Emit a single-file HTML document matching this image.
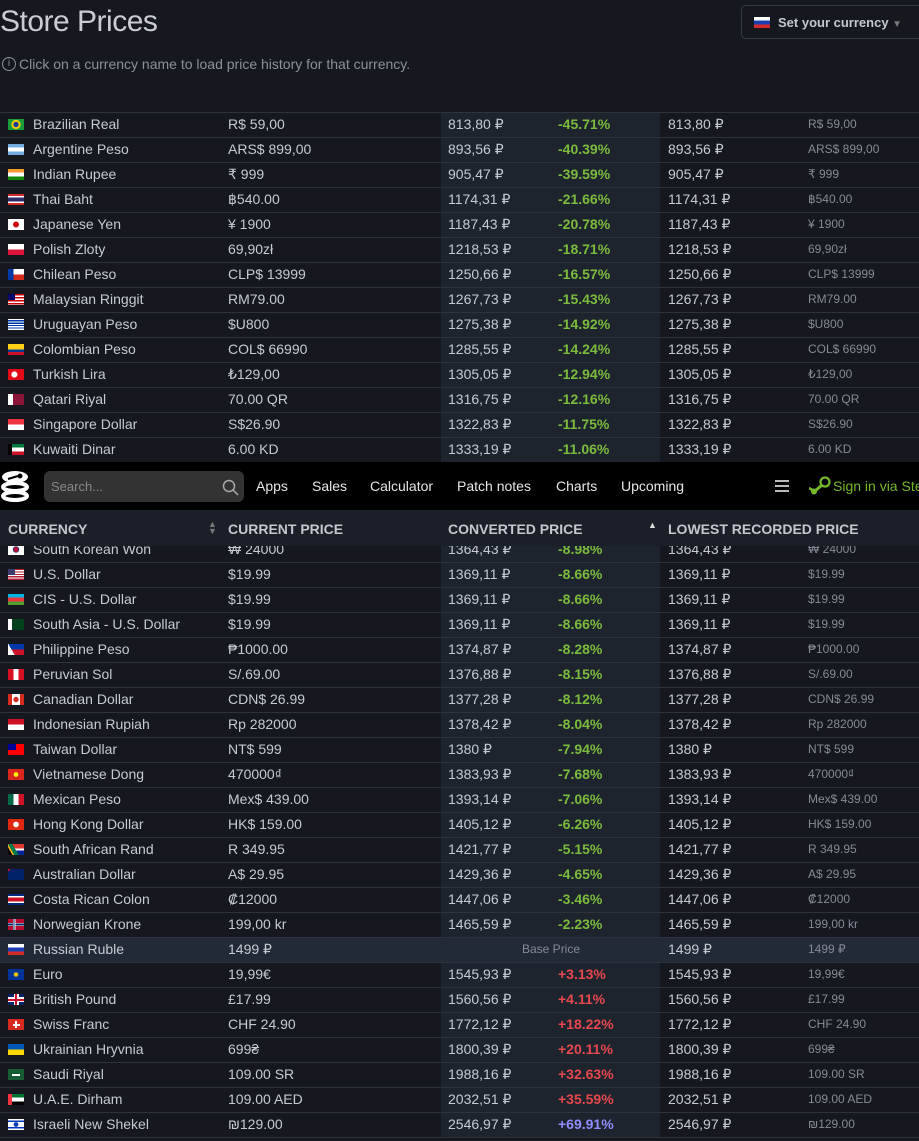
<!DOCTYPE html>
<html><head><meta charset="utf-8"><style>
*{margin:0;padding:0;box-sizing:border-box}
body{width:919px;height:1141px;overflow:hidden;background:#15181f;font-family:"Liberation Sans",sans-serif;color:#c6cbd2;position:relative;font-size:14px}
h1{position:absolute;left:0;top:5px;font-size:30px;font-weight:normal;color:#c9cdd3;letter-spacing:-0.5px}
.info{position:absolute;left:2px;top:56px;font-size:14px;color:#8b919a;display:flex;align-items:center;white-space:nowrap}
.info b{display:inline-block;width:14px;height:14px;border:1.3px solid #8b919a;border-radius:50%;font-size:10px;text-align:center;line-height:11px;font-weight:normal;margin-right:3px}
.btn{position:absolute;left:741px;top:5px;width:190px;height:34px;border:1px solid #343a46;border-radius:5px;font-weight:bold;font-size:13px;color:#c3c8cf}
.btn i{position:absolute;left:12px;top:11px;width:16px;height:11px;background:linear-gradient(#fff 33%,#1a3fb0 33%,#1a3fb0 66%,#d52b2b 66%)}
.btn span{position:absolute;left:36px;top:9px;white-space:nowrap}
.strip{position:absolute;left:441px;width:219px;background:#1e242d}
.r{position:absolute;left:0;width:919px;height:25px;border-top:1px solid #2d323c}
.r>*{position:absolute;top:3px;white-space:nowrap}
.f{left:8px;top:6px!important;width:16px;height:11px}
.n{left:33px}.p{left:228px}.c{left:448px}.g{left:558px;font-weight:bold;color:#7cbb3d}
.g.red{color:#e5484d}.g.pur{color:#8f8dff}
.l{left:668px}.s{left:808px;font-size:12px;color:#858b94;top:4px!important}
.nav{position:absolute;left:0;top:462px;width:919px;height:48px;background:#000}
.nav .srch{position:absolute;left:44px;top:9px;width:200px;height:31px;background:#333;border-radius:6px;color:#888;font-size:13px;padding:8px 0 0 7px}
.nav a{position:absolute;top:16px;color:#e6e6e6;font-size:14px;white-space:nowrap}
.hd{position:absolute;left:0;top:510px;width:919px;height:36px;background:#1b1f27;font-weight:bold;font-size:14px;color:#c3c8cf}
.hd span{position:absolute;top:11px}
</style></head><body>
<h1>Store Prices</h1>
<div class="info"><b>i</b>Click on a currency name to load price history for that currency.</div>
<div class="btn"><i></i><span>Set your currency <span style="position:static;color:#777;font-size:10px">▼</span></span></div>
<div class="strip" style="top:112px;height:350px"></div>
<div class="strip" style="top:537px;height:600px"></div>

<div class="r" style="top:112px"><i class="f" style="background:radial-gradient(circle,#1a3f9a 25%,#f5d000 30%,#f5d000 45%,#1b9a3a 50%)"></i><span class="n">Brazilian Real</span><span class="p">R$ 59,00</span><span class="c">813,80 ₽</span><span class="g">-45.71%</span><span class="l">813,80 ₽</span><span class="s">R$ 59,00</span></div>
<div class="r" style="top:137px"><i class="f" style="background:linear-gradient(#74acdf 33%,#fff 33%,#fff 66%,#74acdf 66%)"></i><span class="n">Argentine Peso</span><span class="p">ARS$ 899,00</span><span class="c">893,56 ₽</span><span class="g">-40.39%</span><span class="l">893,56 ₽</span><span class="s">ARS$ 899,00</span></div>
<div class="r" style="top:162px"><i class="f" style="background:linear-gradient(#f79a2e 33%,#fff 33%,#fff 66%,#138808 66%)"></i><span class="n">Indian Rupee</span><span class="p">₹ 999</span><span class="c">905,47 ₽</span><span class="g">-39.59%</span><span class="l">905,47 ₽</span><span class="s">₹ 999</span></div>
<div class="r" style="top:187px"><i class="f" style="background:linear-gradient(#d52b2b 18%,#fff 18%,#fff 33%,#2d2a6a 33%,#2d2a6a 66%,#fff 66%,#fff 82%,#d52b2b 82%)"></i><span class="n">Thai Baht</span><span class="p">฿540.00</span><span class="c">1174,31 ₽</span><span class="g">-21.66%</span><span class="l">1174,31 ₽</span><span class="s">฿540.00</span></div>
<div class="r" style="top:212px"><i class="f" style="background:radial-gradient(circle,#c00 28%,#fff 32%)"></i><span class="n">Japanese Yen</span><span class="p">¥ 1900</span><span class="c">1187,43 ₽</span><span class="g">-20.78%</span><span class="l">1187,43 ₽</span><span class="s">¥ 1900</span></div>
<div class="r" style="top:237px"><i class="f" style="background:linear-gradient(#fff 50%,#dc143c 50%)"></i><span class="n">Polish Zloty</span><span class="p">69,90zł</span><span class="c">1218,53 ₽</span><span class="g">-18.71%</span><span class="l">1218,53 ₽</span><span class="s">69,90zł</span></div>
<div class="r" style="top:262px"><i class="f" style="background:linear-gradient(90deg,#0039a6 35%,transparent 35%),linear-gradient(#fff 50%,#d52b1e 50%)"></i><span class="n">Chilean Peso</span><span class="p">CLP$ 13999</span><span class="c">1250,66 ₽</span><span class="g">-16.57%</span><span class="l">1250,66 ₽</span><span class="s">CLP$ 13999</span></div>
<div class="r" style="top:287px"><i class="f" style="background:linear-gradient(90deg,#010066 45%,transparent 45%) 0 0/16px 6px no-repeat,repeating-linear-gradient(#cc0001 0 1.5px,#fff 1.5px 3px)"></i><span class="n">Malaysian Ringgit</span><span class="p">RM79.00</span><span class="c">1267,73 ₽</span><span class="g">-15.43%</span><span class="l">1267,73 ₽</span><span class="s">RM79.00</span></div>
<div class="r" style="top:312px"><i class="f" style="background:repeating-linear-gradient(#fff 0 1.2px,#0038a8 1.2px 2.4px)"></i><span class="n">Uruguayan Peso</span><span class="p">$U800</span><span class="c">1275,38 ₽</span><span class="g">-14.92%</span><span class="l">1275,38 ₽</span><span class="s">$U800</span></div>
<div class="r" style="top:337px"><i class="f" style="background:linear-gradient(#fcd116 50%,#003893 50%,#003893 75%,#ce1126 75%)"></i><span class="n">Colombian Peso</span><span class="p">COL$ 66990</span><span class="c">1285,55 ₽</span><span class="g">-14.24%</span><span class="l">1285,55 ₽</span><span class="s">COL$ 66990</span></div>
<div class="r" style="top:362px"><i class="f" style="background:radial-gradient(circle at 40% 50%,#fff 25%,#e30a17 30%)"></i><span class="n">Turkish Lira</span><span class="p">₺129,00</span><span class="c">1305,05 ₽</span><span class="g">-12.94%</span><span class="l">1305,05 ₽</span><span class="s">₺129,00</span></div>
<div class="r" style="top:387px"><i class="f" style="background:linear-gradient(90deg,#fff 30%,#8a1538 30%)"></i><span class="n">Qatari Riyal</span><span class="p">70.00 QR</span><span class="c">1316,75 ₽</span><span class="g">-12.16%</span><span class="l">1316,75 ₽</span><span class="s">70.00 QR</span></div>
<div class="r" style="top:412px"><i class="f" style="background:linear-gradient(#ef3340 50%,#fff 50%)"></i><span class="n">Singapore Dollar</span><span class="p">S$26.90</span><span class="c">1322,83 ₽</span><span class="g">-11.75%</span><span class="l">1322,83 ₽</span><span class="s">S$26.90</span></div>
<div class="r" style="top:437px"><i class="f" style="background:linear-gradient(90deg,#000 25%,transparent 25%),linear-gradient(#007a3d 33%,#fff 33%,#fff 66%,#ce1126 66%)"></i><span class="n">Kuwaiti Dinar</span><span class="p">6.00 KD</span><span class="c">1333,19 ₽</span><span class="g">-11.06%</span><span class="l">1333,19 ₽</span><span class="s">6.00 KD</span></div>

<div class="r" style="top:537px"><i class="f" style="background:radial-gradient(circle,#c60c30 20%,#003478 30%,#fff 35%)"></i><span class="n">South Korean Won</span><span class="p">₩ 24000</span><span class="c">1364,43 ₽</span><span class="g">-8.98%</span><span class="l">1364,43 ₽</span><span class="s">₩ 24000</span></div>
<div class="r" style="top:562px"><i class="f" style="background:linear-gradient(90deg,#3c3b6e 45%,transparent 45%) 0 0/16px 6px no-repeat,repeating-linear-gradient(#b22234 0 1.2px,#fff 1.2px 2.4px)"></i><span class="n">U.S. Dollar</span><span class="p">$19.99</span><span class="c">1369,11 ₽</span><span class="g">-8.66%</span><span class="l">1369,11 ₽</span><span class="s">$19.99</span></div>
<div class="r" style="top:587px"><i class="f" style="background:linear-gradient(#00b5e2 33%,#ef3340 33%,#ef3340 66%,#509e2f 66%)"></i><span class="n">CIS - U.S. Dollar</span><span class="p">$19.99</span><span class="c">1369,11 ₽</span><span class="g">-8.66%</span><span class="l">1369,11 ₽</span><span class="s">$19.99</span></div>
<div class="r" style="top:612px"><i class="f" style="background:linear-gradient(90deg,#fff 25%,#01411c 25%)"></i><span class="n">South Asia - U.S. Dollar</span><span class="p">$19.99</span><span class="c">1369,11 ₽</span><span class="g">-8.66%</span><span class="l">1369,11 ₽</span><span class="s">$19.99</span></div>
<div class="r" style="top:637px"><i class="f" style="background:linear-gradient(60deg,#fff 30%,transparent 30%),linear-gradient(#0038a8 50%,#ce1126 50%)"></i><span class="n">Philippine Peso</span><span class="p">₱1000.00</span><span class="c">1374,87 ₽</span><span class="g">-8.28%</span><span class="l">1374,87 ₽</span><span class="s">₱1000.00</span></div>
<div class="r" style="top:662px"><i class="f" style="background:linear-gradient(90deg,#d91023 33%,#fff 33%,#fff 66%,#d91023 66%)"></i><span class="n">Peruvian Sol</span><span class="p">S/.69.00</span><span class="c">1376,88 ₽</span><span class="g">-8.15%</span><span class="l">1376,88 ₽</span><span class="s">S/.69.00</span></div>
<div class="r" style="top:687px"><i class="f" style="background:radial-gradient(circle,#d52b1e 25%,transparent 30%),linear-gradient(90deg,#d52b1e 25%,#fff 25%,#fff 75%,#d52b1e 75%)"></i><span class="n">Canadian Dollar</span><span class="p">CDN$ 26.99</span><span class="c">1377,28 ₽</span><span class="g">-8.12%</span><span class="l">1377,28 ₽</span><span class="s">CDN$ 26.99</span></div>
<div class="r" style="top:712px"><i class="f" style="background:linear-gradient(#ce1126 50%,#fff 50%)"></i><span class="n">Indonesian Rupiah</span><span class="p">Rp 282000</span><span class="c">1378,42 ₽</span><span class="g">-8.04%</span><span class="l">1378,42 ₽</span><span class="s">Rp 282000</span></div>
<div class="r" style="top:737px"><i class="f" style="background:linear-gradient(90deg,#000095 50%,transparent 50%) 0 0/16px 6px no-repeat,#fe0000"></i><span class="n">Taiwan Dollar</span><span class="p">NT$ 599</span><span class="c">1380 ₽</span><span class="g">-7.94%</span><span class="l">1380 ₽</span><span class="s">NT$ 599</span></div>
<div class="r" style="top:762px"><i class="f" style="background:radial-gradient(circle,#ff0 20%,#da251d 28%)"></i><span class="n">Vietnamese Dong</span><span class="p">470000₫</span><span class="c">1383,93 ₽</span><span class="g">-7.68%</span><span class="l">1383,93 ₽</span><span class="s">470000₫</span></div>
<div class="r" style="top:787px"><i class="f" style="background:linear-gradient(90deg,#006847 33%,#fff 33%,#fff 66%,#ce1126 66%)"></i><span class="n">Mexican Peso</span><span class="p">Mex$ 439.00</span><span class="c">1393,14 ₽</span><span class="g">-7.06%</span><span class="l">1393,14 ₽</span><span class="s">Mex$ 439.00</span></div>
<div class="r" style="top:812px"><i class="f" style="background:radial-gradient(circle,#fff 25%,#de2910 32%)"></i><span class="n">Hong Kong Dollar</span><span class="p">HK$ 159.00</span><span class="c">1405,12 ₽</span><span class="g">-6.26%</span><span class="l">1405,12 ₽</span><span class="s">HK$ 159.00</span></div>
<div class="r" style="top:837px"><i class="f" style="background:linear-gradient(60deg,#000 20%,#ffb612 20%,#ffb612 28%,#007a4d 28%,#007a4d 48%,transparent 48%),linear-gradient(#de3831 40%,#fff 40%,#fff 60%,#002395 60%)"></i><span class="n">South African Rand</span><span class="p">R 349.95</span><span class="c">1421,77 ₽</span><span class="g">-5.15%</span><span class="l">1421,77 ₽</span><span class="s">R 349.95</span></div>
<div class="r" style="top:862px"><i class="f" style="background:linear-gradient(135deg,#c8102e 0 20%,transparent 20%) 0 0/8px 6px no-repeat,#012169"></i><span class="n">Australian Dollar</span><span class="p">A$ 29.95</span><span class="c">1429,36 ₽</span><span class="g">-4.65%</span><span class="l">1429,36 ₽</span><span class="s">A$ 29.95</span></div>
<div class="r" style="top:887px"><i class="f" style="background:linear-gradient(#002b7f 16%,#fff 16%,#fff 33%,#ce1126 33%,#ce1126 66%,#fff 66%,#fff 84%,#002b7f 84%)"></i><span class="n">Costa Rican Colon</span><span class="p">₡12000</span><span class="c">1447,06 ₽</span><span class="g">-3.46%</span><span class="l">1447,06 ₽</span><span class="s">₡12000</span></div>
<div class="r" style="top:912px"><i class="f" style="background:linear-gradient(90deg,transparent 30%,#fff 30%,#fff 34%,#002868 34%,#002868 42%,#fff 42%,#fff 46%,transparent 46%),linear-gradient(#ba0c2f 36%,#fff 36%,#fff 42%,#002868 42%,#002868 58%,#fff 58%,#fff 64%,#ba0c2f 64%)"></i><span class="n">Norwegian Krone</span><span class="p">199,00 kr</span><span class="c">1465,59 ₽</span><span class="g">-2.23%</span><span class="l">1465,59 ₽</span><span class="s">199,00 kr</span></div>
<div class="r" style="top:937px;background:#222a35"><i class="f" style="background:linear-gradient(#fff 33%,#1a3fb0 33%,#1a3fb0 66%,#d52b2b 66%)"></i><span class="n">Russian Ruble</span><span class="p">1499 ₽</span><span style="left:522px;font-size:12px;color:#858b94;top:4px">Base Price</span><span class="l">1499 ₽</span><span class="s">1499 ₽</span></div>
<div class="r" style="top:962px"><i class="f" style="background:radial-gradient(circle,#fc0 15%,#039 30%)"></i><span class="n">Euro</span><span class="p">19,99€</span><span class="c">1545,93 ₽</span><span class="g red">+3.13%</span><span class="l">1545,93 ₽</span><span class="s">19,99€</span></div>
<div class="r" style="top:987px"><i class="f" style="background:linear-gradient(#c8102e,#c8102e) center/2px 11px no-repeat,linear-gradient(#c8102e,#c8102e) center/16px 2px no-repeat,linear-gradient(#fff,#fff) center/5px 11px no-repeat,linear-gradient(#fff,#fff) center/16px 5px no-repeat,#012169"></i><span class="n">British Pound</span><span class="p">£17.99</span><span class="c">1560,56 ₽</span><span class="g red">+4.11%</span><span class="l">1560,56 ₽</span><span class="s">£17.99</span></div>
<div class="r" style="top:1012px"><i class="f" style="background:linear-gradient(#fff,#fff) center/2px 7px no-repeat,linear-gradient(#fff,#fff) center/7px 2px no-repeat,#d52b1e"></i><span class="n">Swiss Franc</span><span class="p">CHF 24.90</span><span class="c">1772,12 ₽</span><span class="g red">+18.22%</span><span class="l">1772,12 ₽</span><span class="s">CHF 24.90</span></div>
<div class="r" style="top:1037px"><i class="f" style="background:linear-gradient(#0057b7 50%,#ffd700 50%)"></i><span class="n">Ukrainian Hryvnia</span><span class="p">699₴</span><span class="c">1800,39 ₽</span><span class="g red">+20.11%</span><span class="l">1800,39 ₽</span><span class="s">699₴</span></div>
<div class="r" style="top:1062px"><i class="f" style="background:linear-gradient(#fff,#fff) center/8px 2px no-repeat,#165d31"></i><span class="n">Saudi Riyal</span><span class="p">109.00 SR</span><span class="c">1988,16 ₽</span><span class="g red">+32.63%</span><span class="l">1988,16 ₽</span><span class="s">109.00 SR</span></div>
<div class="r" style="top:1087px"><i class="f" style="background:linear-gradient(90deg,#ef3340 25%,transparent 25%),linear-gradient(#00732f 33%,#fff 33%,#fff 66%,#000 66%)"></i><span class="n">U.A.E. Dirham</span><span class="p">109.00 AED</span><span class="c">2032,51 ₽</span><span class="g red">+35.59%</span><span class="l">2032,51 ₽</span><span class="s">109.00 AED</span></div>
<div class="r" style="top:1112px;border-bottom:1px solid #2d323c;height:26px"><i class="f" style="background:radial-gradient(circle,#0038b8 20%,transparent 28%),linear-gradient(#fff 15%,#0038b8 15%,#0038b8 28%,#fff 28%,#fff 72%,#0038b8 72%,#0038b8 85%,#fff 85%)"></i><span class="n">Israeli New Shekel</span><span class="p">₪129.00</span><span class="c">2546,97 ₽</span><span class="g pur">+69.91%</span><span class="l">2546,97 ₽</span><span class="s">₪129.00</span></div>

<div class="hd"><span style="left:8px">CURRENCY</span><span style="left:208px;font-size:9px;color:#777;top:11px;line-height:7px">▲<br>▼</span><span style="left:228px">CURRENT PRICE</span><span style="left:448px">CONVERTED PRICE</span><span style="left:648px;font-size:9px;color:#ddd;top:10px">▲</span><span style="left:668px">LOWEST RECORDED PRICE</span></div>

<div class="nav">
<svg style="position:absolute;left:0;top:7px" width="34" height="34" viewBox="0 0 34 34"><g fill="none" stroke="#fff" stroke-width="4"><ellipse cx="15" cy="27" rx="12" ry="4"/><ellipse cx="15" cy="18" rx="12" ry="4"/></g><ellipse cx="15" cy="8" rx="13" ry="6" fill="#fff"/><circle cx="20" cy="7" r="2.5" fill="#000"/><path d="M8 10 L18 7" stroke="#000" stroke-width="2"/></svg>
<div class="srch">Search...</div>
<svg style="position:absolute;left:222px;top:17px" width="17" height="17" viewBox="0 0 17 17"><circle cx="7" cy="7" r="5.5" fill="none" stroke="#aaa" stroke-width="1.5"/><path d="M11 11 L16 16" stroke="#aaa" stroke-width="1.5"/></svg>
<a style="left:256px">Apps</a><a style="left:312px">Sales</a><a style="left:370px">Calculator</a><a style="left:457px">Patch notes</a><a style="left:556px">Charts</a><a style="left:621px">Upcoming</a>
<div style="position:absolute;left:775px;top:18px;width:14px;height:12px;border-top:2px solid #bbb;border-bottom:2px solid #bbb"><div style="margin-top:3px;height:2px;background:#bbb"></div></div>
<svg style="position:absolute;left:809px;top:14px" width="22" height="20" viewBox="0 0 22 20"><circle cx="16" cy="6" r="4.5" fill="none" stroke="#75b82b" stroke-width="2.2"/><path d="M13 9 L6 15" stroke="#75b82b" stroke-width="3"/><circle cx="5" cy="15.5" r="3" fill="#75b82b"/><path d="M0 12 L5 15" stroke="#75b82b" stroke-width="2.5"/></svg>
<a style="left:833px;color:#75b82b">Sign in via Steam</a>
</div>
</body></html>
